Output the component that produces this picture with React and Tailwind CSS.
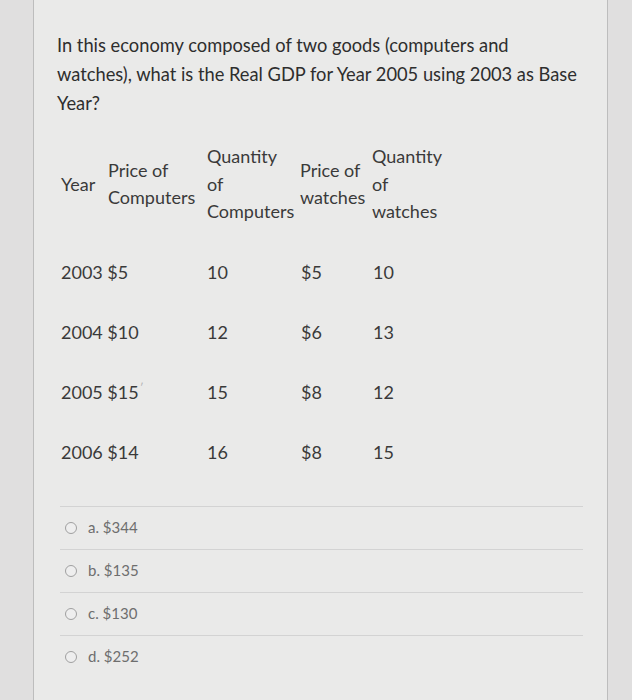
import React from 'react';

const header = [
  { w: 'w-[47px]', lines: ['Year'] },
  { w: 'w-[99px]', lines: ['Price of', 'Computers'] },
  { w: 'w-[93px]', lines: ['Quantity', 'of', 'Computers'] },
  { w: 'w-[72px]', lines: ['Price of', 'watches'] },
  { w: 'w-[90px]', lines: ['Quantity', 'of', 'watches'] },
];

const rows = [
  ['2003 $5', '10', '$5', '10'],
  ['2004 $10', '12', '$6', '13'],
  ['2005 $15', '15', '$8', '12'],
  ['2006 $14', '16', '$8', '15'],
];

const options = ['a. $344', 'b. $135', 'c. $130', 'd. $252'];

export default function App() {
  return (
    <div className="w-[632px] h-[700px] overflow-hidden bg-[#e0dfdf] flex font-['Lato',sans-serif]">
      <div className="ml-[33px] w-[575px] h-full bg-[#eaeae9] border-x border-[#bdbdbd] pl-[23px] pt-[31px]">
        {/* question */}
        <p className="text-[18.3px] leading-[29px] text-[#2e2e2e] w-[550px]">
          In this economy composed of two goods (computers and
          <br />
          watches), what is the Real GDP for Year 2005 using 2003 as Base
          <br />
          Year?
        </p>

        {/* table header */}
        <div className="flex items-center mt-[25px] pl-[4px] text-[18px] leading-[27.5px] text-[#3a3a3a]">
          {header.map((h, i) => (
            <div key={i} className={`${h.w} shrink-0`}>
              {h.lines.map((l) => (
                <div key={l}>{l}</div>
              ))}
            </div>
          ))}
        </div>

        {/* table rows */}
        <div className="mt-[17px] pl-[4px] text-[18px] text-[#3a3a3a]">
          {rows.map((r, i) => (
            <div key={i} className="flex items-center h-[60px]">
              <div className="w-[146px] shrink-0">
                {r[0]}
                {i === 2 && <span className="text-[#b5b5b5] text-[12px] align-top ml-[1px]">′</span>}
              </div>
              <div className="w-[94px] shrink-0">{r[1]}</div>
              <div className="w-[72px] shrink-0">{r[2]}</div>
              <div className="shrink-0">{r[3]}</div>
            </div>
          ))}
        </div>

        {/* answers */}
        <div className="mt-[23px] mr-[24px] ml-[3px]">
          {options.map((o) => (
            <div key={o} className="flex items-center h-[43px] border-t border-[#d3d3d3] pl-[5px] gap-[11px]">
              <span className="w-[12px] h-[12px] rounded-full border border-[#a0a0a0] bg-[#eeeeee]" />
              <span className="text-[15px] text-[#6e6e6e]">{o}</span>
            </div>
          ))}
        </div>
      </div>
    </div>
  );
}
